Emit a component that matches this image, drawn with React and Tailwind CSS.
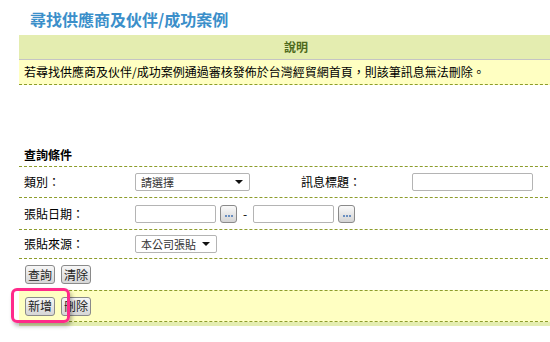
import React from "react";

const font = { fontFamily: '"Noto Sans CJK TC", "Noto Sans", sans-serif' };

// small select box with a black arrow
const Select = ({ value, width }) => (
  <div
    className={`${width} h-[18px] flex items-center justify-between pl-[5px] pr-[6px] bg-white border border-[#b4b4b4] rounded-[2px] text-[11px] text-[#333] leading-none`}
  >
    <span>{value}</span>
    <svg width="8" height="4" viewBox="0 0 8 4">
      <path d="M0 0 H8 L4 4 Z" fill="#111" />
    </svg>
  </div>
);

const Input = ({ width }) => (
  <div className={`${width} h-[18px] bg-white border border-[#b4b4b4] rounded-[2px]`}></div>
);

const CalButton = () => (
  <div className="w-[17px] h-[18px] flex items-end justify-center pb-[5px] border border-[#8a8a8a] rounded-[3px] bg-gradient-to-b from-[#fafafa] to-[#d4d4d4] gap-[1px]">
    <span className="w-[2px] h-[2px] bg-[#6a8fc0]"></span>
    <span className="w-[2px] h-[2px] bg-[#6a8fc0]"></span>
    <span className="w-[2px] h-[2px] bg-[#6a8fc0]"></span>
  </div>
);

const Btn = ({ children }) => (
  <button
    type="button"
    className="w-[30px] h-[19px] flex items-center justify-center border border-[#8a8a8a] rounded-[3px] bg-gradient-to-b from-[#f7f7f7] to-[#d6d6d6] text-[12px] text-[#222] leading-none"
  >
    {children}
  </button>
);

const App = () => {
  return (
    <div className="relative w-[550px] h-[342px] overflow-hidden bg-white text-black" style={font}>
      {/* Title */}
      <h2 className="pl-[30px] pt-[9px] h-[35px] text-[16px] font-bold text-[#3b8fca] leading-[20px]">
        尋找供應商及伙伴/成功案例
      </h2>

      <div className="ml-[19px] w-[554px]">
        {/* Notice table */}
        <div className="h-[25px] flex items-center justify-center bg-[#e4edb0] border-b border-[#c4c4c4] text-[12px] font-bold text-[#4f6a1c]">
          說明
        </div>
        <div className="h-[25px] flex items-center pl-[5px] bg-[#ffffc2] border-b border-dashed border-[#8d9d2b] text-[12px] leading-none">
          若尋找供應商及伙伴/成功案例通過審核發佈於台灣經貿網首頁，則該筆訊息無法刪除。
        </div>

        {/* Query conditions */}
        <div className="mt-[59px] h-[23px] flex items-center pl-[5px] border-b border-dashed border-[#8d9d2b] text-[12px] font-bold">
          查詢條件
        </div>

        <div className="h-[31px] flex items-center pl-[5px] border-b border-dashed border-[#8d9d2b] text-[12px]">
          <span className="w-[111px]">類別：</span>
          <Select value="請選擇" width="w-[115px]" />
          <span className="ml-[51px] w-[111px]">訊息標題：</span>
          <Input width="w-[121px]" />
        </div>

        <div className="h-[32px] flex items-center pl-[5px] border-b border-dashed border-[#8d9d2b] text-[12px]">
          <span className="w-[111px]">張貼日期：</span>
          <Input width="w-[81px]" />
          <span className="ml-[4px]">
            <CalButton />
          </span>
          <span className="mx-[6px]">-</span>
          <Input width="w-[81px]" />
          <span className="ml-[4px]">
            <CalButton />
          </span>
        </div>

        <div className="h-[29px] flex items-center pl-[5px] border-b border-dashed border-[#8d9d2b] text-[12px]">
          <span className="w-[111px]">張貼來源：</span>
          <Select value="本公司張貼" width="w-[82px]" />
        </div>

        <div className="h-[31px] flex items-center gap-[6px] pl-[6px]">
          <Btn>查詢</Btn>
          <Btn>清除</Btn>
        </div>

        <div className="h-[32px] flex items-center gap-[6px] pl-[6px] bg-[#ffffc2] border-y border-dashed border-[#8d9d2b]">
          <Btn>新增</Btn>
          <Btn>刪除</Btn>
        </div>
        <div className="h-[4px] bg-[#e4edb0]"></div>
      </div>

      {/* highlight annotation */}
      <div className="absolute left-[11px] top-[288px] w-[59px] h-[35px] border-[3px] border-[#ff2a8a] rounded-[6px] shadow-[2px_3px_4px_rgba(0,0,0,0.3)]"></div>
    </div>
  );
};

export default App;
